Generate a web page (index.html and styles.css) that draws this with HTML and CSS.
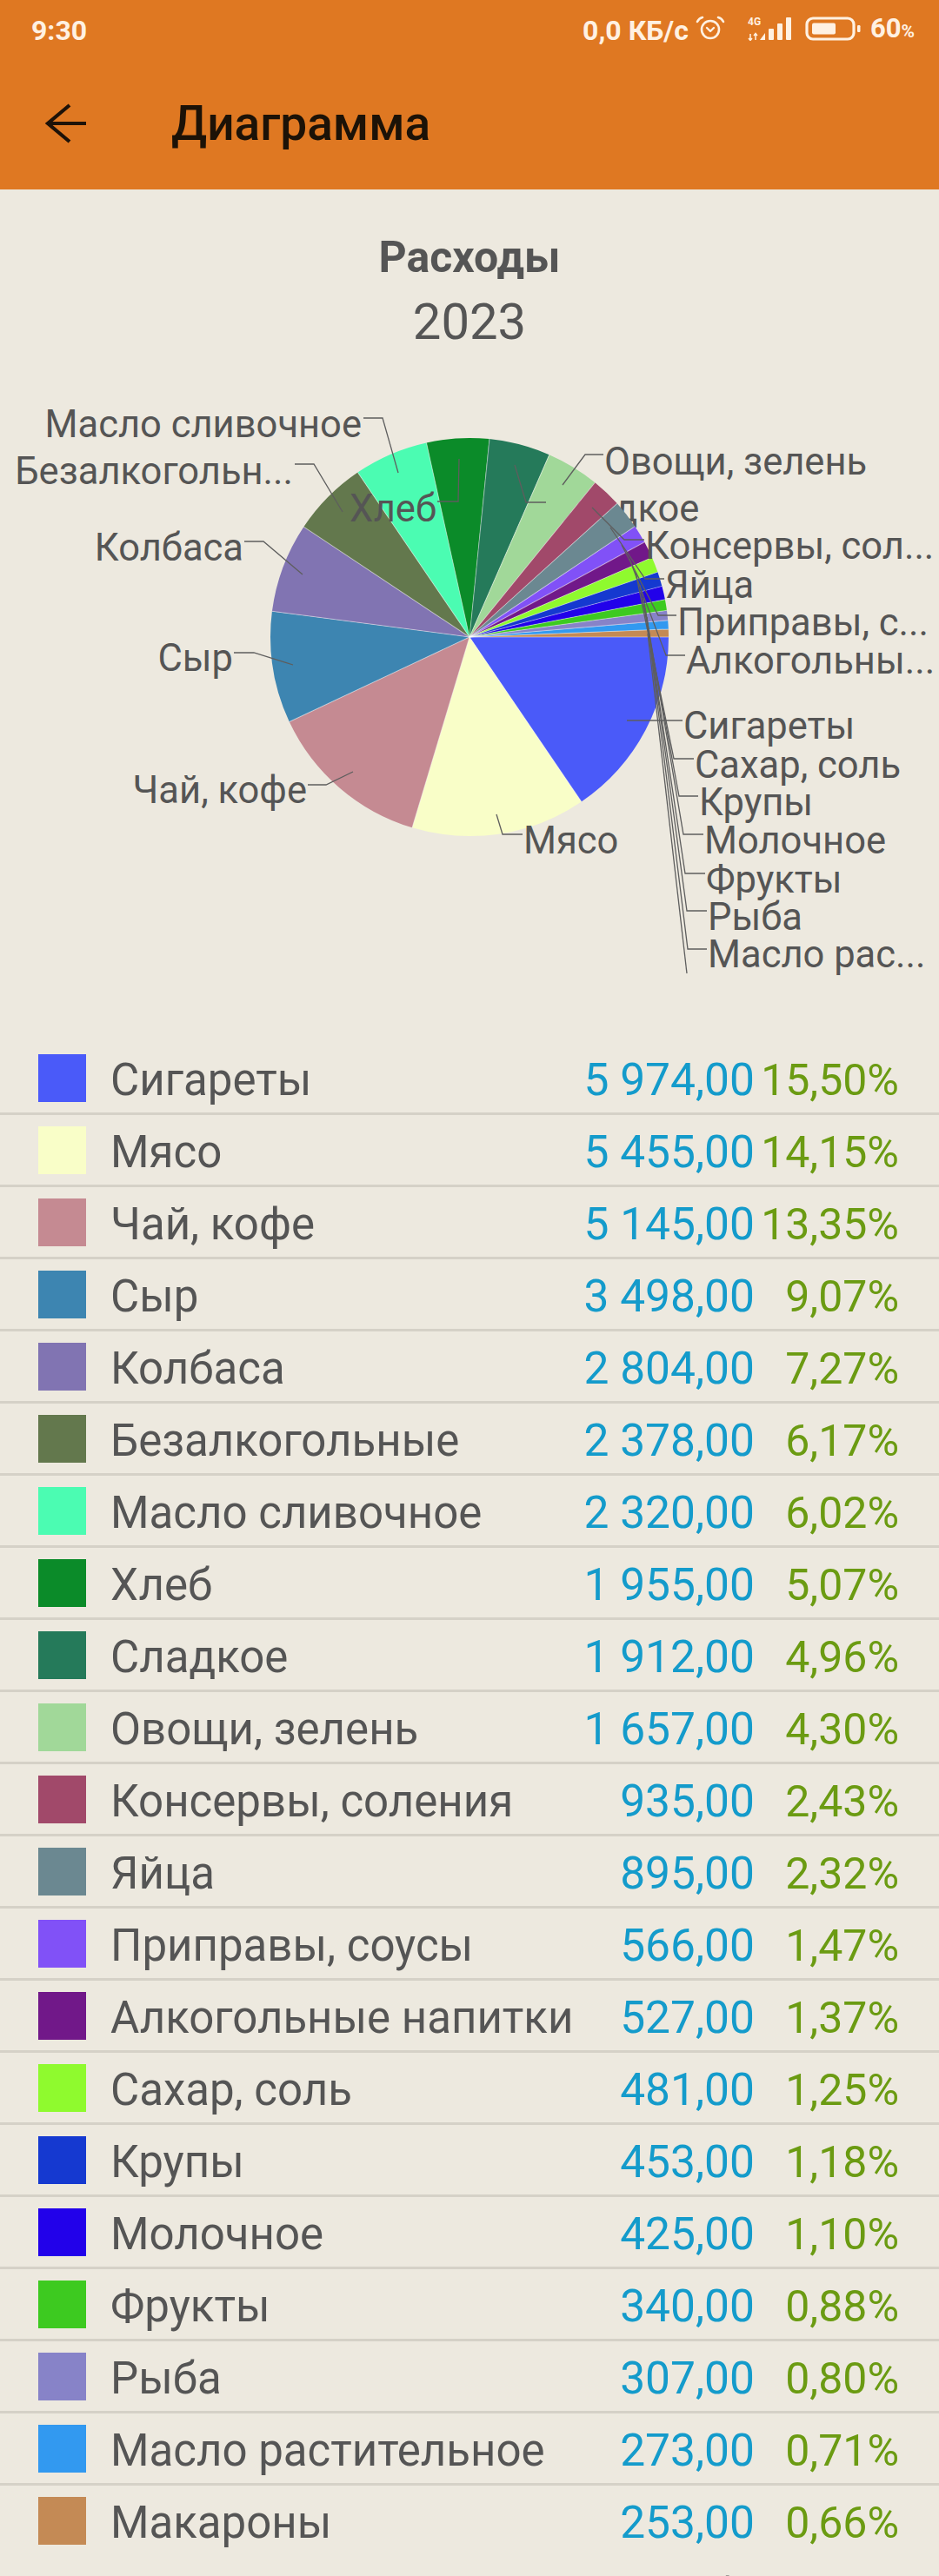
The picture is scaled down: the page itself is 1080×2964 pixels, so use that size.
FILE: index.html
```html
<!DOCTYPE html>
<html lang="ru">
<head>
<meta charset="utf-8">
<title>Диаграмма</title>
<link rel="stylesheet" href="styles.css">
</head>
<body>
<header class="appbar">
  <div class="statusbar">
    <span class="time">9:30</span>
    <div class="status-right">
      <span class="speed">0,0 КБ/с</span>
      <svg class="ico-alarm" width="36" height="28" viewBox="0 0 36 28">
        <circle cx="18" cy="16" r="10" fill="none" stroke="#FFF1E2" stroke-width="2.6"/>
        <path d="M3 7 A9 9 0 0 1 9 2" fill="none" stroke="#FFF1E2" stroke-width="2.6" stroke-linecap="round"/>
        <path d="M27 2 A9 9 0 0 1 33 7" fill="none" stroke="#FFF1E2" stroke-width="2.6" stroke-linecap="round"/>
        <polyline points="14,14 18,18 22,14" fill="none" stroke="#FFF1E2" stroke-width="2.4" stroke-linecap="round" stroke-linejoin="round"/>
      </svg>
      <svg class="ico-signal" width="52" height="28" viewBox="0 0 52 28">
        <text x="0" y="10" class="g4">4G</text>
        <path d="M3 20 V27 M1 25 L3 27.5 L5 25 M9 27 V20 M7 22 L9 19.5 L11 22" fill="none" stroke="#FFF1E2" stroke-width="1.5"/>
        <path d="M14 27 L20 19 L20 27 Z" fill="#FFF1E2"/>
        <rect x="24" y="14" width="6" height="13" rx="1" fill="#FFF1E2"/>
        <rect x="34" y="8" width="6" height="19" rx="1" fill="#FFF1E2"/>
        <rect x="44" y="1" width="6" height="26" rx="1" fill="#FFF1E2"/>
      </svg>
      <svg class="ico-batt" width="66" height="28" viewBox="0 0 66 28">
        <rect x="2" y="2" width="54" height="24" rx="7" fill="none" stroke="#FFF1E2" stroke-width="3.2"/>
        <rect x="8" y="7.5" width="27" height="13" rx="2" fill="#FFF1E2"/>
        <rect x="60" y="10" width="3.5" height="8" rx="1.2" fill="#FFF1E2"/>
      </svg>
      <span class="batt">60<span class="pc">%</span></span>
    </div>
  </div>
  <div class="toolbar">
    <svg class="back" width="60" height="60" viewBox="0 0 60 60">
      <polyline points="33,9 8,30 33,51" fill="none" stroke="#1E1208" stroke-width="4.2"/>
      <line x1="8" y1="30" x2="52" y2="30" stroke="#1E1208" stroke-width="4.2"/>
    </svg>
    <span class="title">Диаграмма</span>
  </div>
</header>

<main class="content">
  <div class="chart-title">Расходы</div>
  <div class="chart-year">2023</div>

  <svg class="pie" width="1080" height="794" viewBox="0 405 1080 794">
    <text class="lbl" x="630" y="600">Сладкое</text>
    <g class="slices" fill="none" stroke-width="229">
      <circle cx="540" cy="733" r="114.5" pathLength="100" stroke="#4A5AF9" stroke-dasharray="15.50 100" stroke-dashoffset="0"/>
      <circle cx="540" cy="733" r="114.5" pathLength="100" stroke="#F9FEC8" stroke-dasharray="14.15 100" stroke-dashoffset="-15.50"/>
      <circle cx="540" cy="733" r="114.5" pathLength="100" stroke="#C58A92" stroke-dasharray="13.35 100" stroke-dashoffset="-29.65"/>
      <circle cx="540" cy="733" r="114.5" pathLength="100" stroke="#3D85B1" stroke-dasharray="9.07 100" stroke-dashoffset="-43.00"/>
      <circle cx="540" cy="733" r="114.5" pathLength="100" stroke="#8174B2" stroke-dasharray="7.27 100" stroke-dashoffset="-52.07"/>
      <circle cx="540" cy="733" r="114.5" pathLength="100" stroke="#63784D" stroke-dasharray="6.17 100" stroke-dashoffset="-59.34"/>
      <circle cx="540" cy="733" r="114.5" pathLength="100" stroke="#4BFCB2" stroke-dasharray="6.02 100" stroke-dashoffset="-65.51"/>
      <circle cx="540" cy="733" r="114.5" pathLength="100" stroke="#0B8B29" stroke-dasharray="5.07 100" stroke-dashoffset="-71.53"/>
      <circle cx="540" cy="733" r="114.5" pathLength="100" stroke="#257A5A" stroke-dasharray="4.96 100" stroke-dashoffset="-76.60"/>
      <circle cx="540" cy="733" r="114.5" pathLength="100" stroke="#A1D899" stroke-dasharray="4.30 100" stroke-dashoffset="-81.56"/>
      <circle cx="540" cy="733" r="114.5" pathLength="100" stroke="#A1496A" stroke-dasharray="2.43 100" stroke-dashoffset="-85.86"/>
      <circle cx="540" cy="733" r="114.5" pathLength="100" stroke="#6B8891" stroke-dasharray="2.32 100" stroke-dashoffset="-88.29"/>
      <circle cx="540" cy="733" r="114.5" pathLength="100" stroke="#8151F7" stroke-dasharray="1.47 100" stroke-dashoffset="-90.61"/>
      <circle cx="540" cy="733" r="114.5" pathLength="100" stroke="#711889" stroke-dasharray="1.37 100" stroke-dashoffset="-92.08"/>
      <circle cx="540" cy="733" r="114.5" pathLength="100" stroke="#8FFA2E" stroke-dasharray="1.25 100" stroke-dashoffset="-93.45"/>
      <circle cx="540" cy="733" r="114.5" pathLength="100" stroke="#1539D0" stroke-dasharray="1.18 100" stroke-dashoffset="-94.70"/>
      <circle cx="540" cy="733" r="114.5" pathLength="100" stroke="#2201EA" stroke-dasharray="1.10 100" stroke-dashoffset="-95.88"/>
      <circle cx="540" cy="733" r="114.5" pathLength="100" stroke="#3DCA20" stroke-dasharray="0.88 100" stroke-dashoffset="-96.98"/>
      <circle cx="540" cy="733" r="114.5" pathLength="100" stroke="#8783C8" stroke-dasharray="0.80 100" stroke-dashoffset="-97.86"/>
      <circle cx="540" cy="733" r="114.5" pathLength="100" stroke="#3299F0" stroke-dasharray="0.71 100" stroke-dashoffset="-98.66"/>
      <circle cx="540" cy="733" r="114.5" pathLength="100" stroke="#C48A55" stroke-dasharray="0.63 100" stroke-dashoffset="-99.37"/>
    </g>
    <g class="seps">
      <line x1="540" y1="733" x2="769" y2="733"/>
      <line x1="540" y1="733" x2="769" y2="733" transform="rotate(55.8 540 733)"/>
      <line x1="540" y1="733" x2="769" y2="733" transform="rotate(106.74 540 733)"/>
      <line x1="540" y1="733" x2="769" y2="733" transform="rotate(154.8 540 733)"/>
      <line x1="540" y1="733" x2="769" y2="733" transform="rotate(187.45 540 733)"/>
      <line x1="540" y1="733" x2="769" y2="733" transform="rotate(213.62 540 733)"/>
      <line x1="540" y1="733" x2="769" y2="733" transform="rotate(235.84 540 733)"/>
      <line x1="540" y1="733" x2="769" y2="733" transform="rotate(257.51 540 733)"/>
      <line x1="540" y1="733" x2="769" y2="733" transform="rotate(275.76 540 733)"/>
      <line x1="540" y1="733" x2="769" y2="733" transform="rotate(293.62 540 733)"/>
      <line x1="540" y1="733" x2="769" y2="733" transform="rotate(309.1 540 733)"/>
      <line x1="540" y1="733" x2="769" y2="733" transform="rotate(317.84 540 733)"/>
      <line x1="540" y1="733" x2="769" y2="733" transform="rotate(326.2 540 733)"/>
      <line x1="540" y1="733" x2="769" y2="733" transform="rotate(331.49 540 733)"/>
      <line x1="540" y1="733" x2="769" y2="733" transform="rotate(336.42 540 733)"/>
      <line x1="540" y1="733" x2="769" y2="733" transform="rotate(340.92 540 733)"/>
      <line x1="540" y1="733" x2="769" y2="733" transform="rotate(345.17 540 733)"/>
      <line x1="540" y1="733" x2="769" y2="733" transform="rotate(349.13 540 733)"/>
      <line x1="540" y1="733" x2="769" y2="733" transform="rotate(352.3 540 733)"/>
      <line x1="540" y1="733" x2="769" y2="733" transform="rotate(355.18 540 733)"/>
      <line x1="540" y1="733" x2="769" y2="733" transform="rotate(357.73 540 733)"/>
    </g>
    <g class="leaders">
      <polyline points="458,544 440,481 418,481"/>
      <polyline points="394,589 361,534 339,534"/>
      <polyline points="348,661 303,623 281,623"/>
      <polyline points="337,765 292,751 269,751"/>
      <polyline points="406,888 375,903 354,903"/>
      <polyline points="528,528 527,577 503,577"/>
      <polyline points="571,937 578,960 601,960"/>
      <polyline points="721,829 764,829 785,829"/>
      <polyline points="592,535 605,578 628,578"/>
      <polyline points="647,558 673,523 694,523"/>
      <polyline points="681,584 718,621 741,621"/>
      <polyline points="702,607 742,666 764,666"/>
      <polyline points="715,627 757,708 778,708"/>
      <polyline points="724,643 766,754 788,754"/>
      <polyline points="731,658 775,873 798,873"/>
      <polyline points="736,673 781,916 803,916"/>
      <polyline points="740,688 786,960 809,960"/>
      <polyline points="742,700 788,1005 811,1005"/>
      <polyline points="744,710 790,1048 813,1048"/>
      <polyline points="745,720 791,1092 813,1092"/>
      <polyline points="745,729 790,1120"/>
    </g>
    <g class="labels">
      <text class="lbl end" x="416" y="503">Масло сливочное</text>
      <text class="lbl end" x="337" y="557">Безалкогольн...</text>
      <text class="lbl end" x="280" y="645">Колбаса</text>
      <text class="lbl end" x="268" y="772">Сыр</text>
      <text class="lbl end" x="353" y="924">Чай, кофе</text>
      <text class="lbl end" x="502" y="600">Хлеб</text>
      <text class="lbl" x="602" y="982">Мясо</text>
      <text class="lbl" x="786" y="850">Сигареты</text>
      <text class="lbl" x="695" y="546">Овощи, зелень</text>
      <text class="lbl" x="742" y="643">Консервы, сол...</text>
      <text class="lbl" x="765" y="688">Яйца</text>
      <text class="lbl" x="779" y="731">Приправы, с...</text>
      <text class="lbl" x="789" y="775">Алкогольны...</text>
      <text class="lbl" x="799" y="895">Сахар, соль</text>
      <text class="lbl" x="804" y="938">Крупы</text>
      <text class="lbl" x="810" y="982">Молочное</text>
      <text class="lbl" x="812" y="1027">Фрукты</text>
      <text class="lbl" x="814" y="1070">Рыба</text>
      <text class="lbl" x="814" y="1113">Масло рас...</text>
    </g>
  </svg>

  <ul class="legend">
    <li class="row"><span class="sw c1"></span><span class="name">Сигареты</span><span class="amt">5&nbsp;974,00</span><span class="pct">15,50%</span></li>
    <li class="row"><span class="sw c2"></span><span class="name">Мясо</span><span class="amt">5&nbsp;455,00</span><span class="pct">14,15%</span></li>
    <li class="row"><span class="sw c3"></span><span class="name">Чай, кофе</span><span class="amt">5&nbsp;145,00</span><span class="pct">13,35%</span></li>
    <li class="row"><span class="sw c4"></span><span class="name">Сыр</span><span class="amt">3&nbsp;498,00</span><span class="pct">9,07%</span></li>
    <li class="row"><span class="sw c5"></span><span class="name">Колбаса</span><span class="amt">2&nbsp;804,00</span><span class="pct">7,27%</span></li>
    <li class="row"><span class="sw c6"></span><span class="name">Безалкогольные</span><span class="amt">2&nbsp;378,00</span><span class="pct">6,17%</span></li>
    <li class="row"><span class="sw c7"></span><span class="name">Масло сливочное</span><span class="amt">2&nbsp;320,00</span><span class="pct">6,02%</span></li>
    <li class="row"><span class="sw c8"></span><span class="name">Хлеб</span><span class="amt">1&nbsp;955,00</span><span class="pct">5,07%</span></li>
    <li class="row"><span class="sw c9"></span><span class="name">Сладкое</span><span class="amt">1&nbsp;912,00</span><span class="pct">4,96%</span></li>
    <li class="row"><span class="sw c10"></span><span class="name">Овощи, зелень</span><span class="amt">1&nbsp;657,00</span><span class="pct">4,30%</span></li>
    <li class="row"><span class="sw c11"></span><span class="name">Консервы, соления</span><span class="amt">935,00</span><span class="pct">2,43%</span></li>
    <li class="row"><span class="sw c12"></span><span class="name">Яйца</span><span class="amt">895,00</span><span class="pct">2,32%</span></li>
    <li class="row"><span class="sw c13"></span><span class="name">Приправы, соусы</span><span class="amt">566,00</span><span class="pct">1,47%</span></li>
    <li class="row"><span class="sw c14"></span><span class="name">Алкогольные напитки</span><span class="amt">527,00</span><span class="pct">1,37%</span></li>
    <li class="row"><span class="sw c15"></span><span class="name">Сахар, соль</span><span class="amt">481,00</span><span class="pct">1,25%</span></li>
    <li class="row"><span class="sw c16"></span><span class="name">Крупы</span><span class="amt">453,00</span><span class="pct">1,18%</span></li>
    <li class="row"><span class="sw c17"></span><span class="name">Молочное</span><span class="amt">425,00</span><span class="pct">1,10%</span></li>
    <li class="row"><span class="sw c18"></span><span class="name">Фрукты</span><span class="amt">340,00</span><span class="pct">0,88%</span></li>
    <li class="row"><span class="sw c19"></span><span class="name">Рыба</span><span class="amt">307,00</span><span class="pct">0,80%</span></li>
    <li class="row"><span class="sw c20"></span><span class="name">Масло растительное</span><span class="amt">273,00</span><span class="pct">0,71%</span></li>
    <li class="row"><span class="sw c21"></span><span class="name">Макароны</span><span class="amt">253,00</span><span class="pct">0,66%</span></li>
  </ul>
  <p class="note">Свой расход по группам товаров, без учёта скидок</p>
</main>
</body>
</html>
```

FILE: styles.css
```css
* { box-sizing: border-box; }
html, body { margin: 0; padding: 0; }
body {
  width: 1080px;
  background: #EDE9DF;
  font-family: Roboto, "Noto Sans", "Liberation Sans", sans-serif;
  color: #555555;
  overflow: hidden;
}

/* ---------- app bar ---------- */
.appbar { background: #DF7822; }
.statusbar {
  height: 66px;
  display: flex;
  align-items: center;
  justify-content: space-between;
  padding: 3px 28px 0 36px;
  color: #FFF1E2;
}
.time { font-weight: 700; font-size: 32px; line-height: 40px; }
.status-right { display: flex; align-items: center; }
.speed { font-weight: 700; font-size: 32px; line-height: 40px; margin-right: 7px; }
.ico-alarm { display: block; margin-right: 25px; margin-top: -6px; }
.ico-signal { display: block; margin-right: 14px; margin-top: -4px; }
.ico-signal .g4 { font-family: Roboto, sans-serif; font-weight: 700; font-size: 12px; fill: #FFF1E2; }
.ico-batt { display: block; margin-right: 9px; margin-top: -3px; }
.batt { font-weight: 700; font-size: 31px; line-height: 40px; }
.batt .pc { font-size: 21px; }

.toolbar {
  height: 152px;
  display: flex;
  align-items: center;
  padding-left: 47px;
}
.back { display: block; }
.title {
  margin-left: 90px;
  font-size: 55px;
  font-weight: 500;
  color: #1C1207;
  line-height: 64px;
}

/* ---------- chart ---------- */
.content { padding-top: 48px; }
.chart-title {
  text-align: center;
  font-weight: 700;
  font-size: 50px;
  line-height: 60px;
  color: #555555;
}
.chart-year {
  margin-top: 9px;
  text-align: center;
  font-size: 58px;
  line-height: 70px;
  color: #555555;
}
.pie { display: block; }
.seps line { stroke: rgba(255, 255, 255, 0.45); stroke-width: 1; }
.leaders polyline { fill: none; stroke: #5E5E5E; stroke-width: 1.3; }
.lbl {
  font-family: Roboto, "Noto Sans", sans-serif;
  font-size: 43.5px;
  fill: #555555;
}
.lbl.end { text-anchor: end; }

/* ---------- legend ---------- */
.legend { list-style: none; margin: 1px 0 0 0; padding: 0; }
.row {
  height: 80px;
  display: flex;
  align-items: center;
  padding: 0 46px 0 44px;
  font-size: 51px;
}
.row + .row { height: 83px; border-top: 3px solid #D5D1C7; }
.sw { width: 55px; height: 55px; flex: none; margin-right: 28px; }
.name, .amt, .pct { padding-top: 5px; white-space: nowrap; }
.name { flex: 1; color: #555555; }
.amt { color: #149BCB; text-align: right; font-size: 51.5px; }
.pct { width: 166px; flex: none; color: #6B9B12; text-align: right; font-size: 50px; }

.c1 { background: #4A5AF9; }
.c2 { background: #F9FEC8; }
.c3 { background: #C58A92; }
.c4 { background: #3D85B1; }
.c5 { background: #8174B2; }
.c6 { background: #63784D; }
.c7 { background: #4BFCB2; }
.c8 { background: #0B8B29; }
.c9 { background: #257A5A; }
.c10 { background: #A1D899; }
.c11 { background: #A1496A; }
.c12 { background: #6B8891; }
.c13 { background: #8151F7; }
.c14 { background: #711889; }
.c15 { background: #8FFA2E; }
.c16 { background: #1539D0; }
.c17 { background: #2201EA; }
.c18 { background: #3DCA20; }
.c19 { background: #8783C8; }
.c20 { background: #3299F0; }
.c21 { background: #C48A55; }

.note {
  margin: 16px 0 0 0;
  padding-left: 17px;
  width: 1080px;
  overflow: hidden;
  font-size: 50px;
  color: #555555;
  white-space: nowrap;
}
```
